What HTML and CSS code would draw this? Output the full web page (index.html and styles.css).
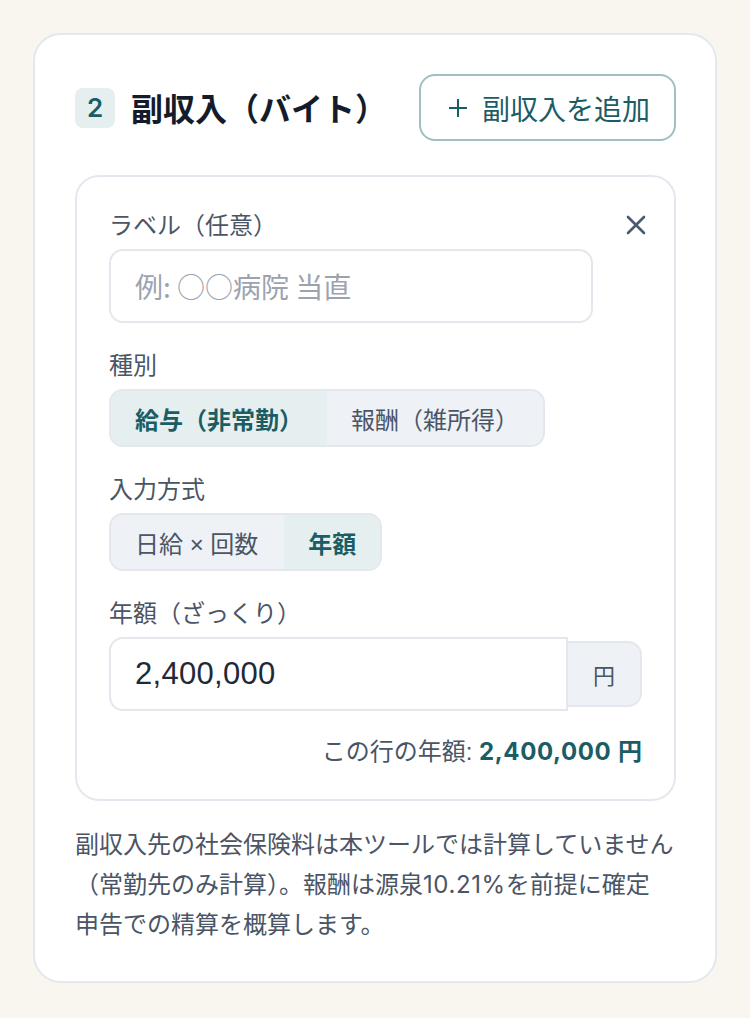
FILE: index.html
```html
<!DOCTYPE html>
<html lang="ja">
<head>
<meta charset="utf-8">
<title>副収入</title>
<link rel="stylesheet" href="styles.css">
</head>
<body>
<section class="card">
  <header class="card-head">
    <div class="head-title">
      <span class="step">2</span>
      <h2 class="title">副収入（バイト）</h2>
    </div>
    <button class="add-btn" type="button">
      <svg class="plus" viewBox="0 0 20 20" width="20" height="20"><path d="M10 1v18M1 10h18" stroke="currentColor" stroke-width="2" fill="none"/></svg>
      <span>副収入を追加</span>
    </button>
  </header>

  <div class="entry">
    <button class="close" type="button" aria-label="削除">
      <svg viewBox="0 0 20 20" width="20" height="20"><path d="M2 2l16 16M18 2L2 18" stroke="currentColor" stroke-width="2.6" stroke-linecap="round" fill="none"/></svg>
    </button>

    <div class="field">
      <label class="label">ラベル（任意）</label>
      <input class="text-input" type="text" placeholder="例: ○○病院 当直">
    </div>

    <div class="field">
      <span class="label">種別</span>
      <div class="seg">
        <span class="seg-item active">給与（非常勤）</span>
        <span class="seg-item">報酬（雑所得）</span>
      </div>
    </div>

    <div class="field">
      <span class="label">入力方式</span>
      <div class="seg">
        <span class="seg-item wide">日給 × 回数</span>
        <span class="seg-item active">年額</span>
      </div>
    </div>

    <div class="field">
      <label class="label">年額（ざっくり）</label>
      <div class="amount-row">
        <input class="amount-input" type="text" value="2,400,000">
        <span class="suffix">円</span>
      </div>
    </div>

    <p class="total">この行の年額: <strong><span class="num">2,400,000</span> 円</strong></p>
  </div>

  <p class="note">副収入先の社会保険料は本ツールでは計算していません（常勤先のみ計算）。報酬は源泉<span class="num">10.21%</span>を前提に確定<br>申告での精算を概算します。</p>
</section>
</body>
</html>
```

FILE: styles.css
```css
* { box-sizing: border-box; }

html, body {
  margin: 0;
  padding: 0;
}

body {
  background: #f9f6ef;
  font-family: "Liberation Sans", "Noto Sans CJK JP", sans-serif;
  color: #1f2937;
  padding: 33px;
}

.card {
  background: #ffffff;
  border: 2px solid #e4e8ee;
  border-radius: 28px;
  padding: 39px 39px 36px 40px;
}

.card-head {
  display: flex;
  align-items: center;
  justify-content: space-between;
}

.head-title {
  display: flex;
  align-items: center;
  gap: 16px;
}

.step {
  width: 40px;
  height: 40px;
  border-radius: 8px;
  background: #e5eff0;
  color: #1a5d65;
  font-family: "Inter", sans-serif;
  font-weight: 600;
  font-size: 26px;
  display: flex;
  align-items: center;
  justify-content: center;
}

.title {
  margin: 0;
  font-size: 32px;
  font-weight: 700;
  color: #141c2c;
  font-family: "Noto Sans CJK JP", sans-serif;
  line-height: 1.2;
}

.add-btn {
  height: 67px;
  padding: 0 24px 0 27px;
  border: 2px solid #9fbfc3;
  border-radius: 16px;
  background: #ffffff;
  color: #1a5d65;
  font-family: "Noto Sans CJK JP", sans-serif;
  font-size: 28px;
  display: flex;
  align-items: center;
  gap: 14px;
}

.plus { display: block; }

.entry {
  position: relative;
  margin-top: 34px;
  border: 2px solid #e4e8ee;
  border-radius: 24px;
  padding: 32px 32px 30px;
}

.close {
  position: absolute;
  top: 38px;
  right: 28px;
  width: 20px;
  height: 20px;
  padding: 0;
  border: 0;
  background: none;
  color: #4b5a6e;
}

.close svg { display: block; }

.field + .field { margin-top: 26px; }

.label {
  display: block;
  font-size: 24px;
  line-height: 34px;
  color: #4a5565;
  margin-bottom: 6px;
}

.text-input {
  display: block;
  width: 484px;
  height: 74px;
  border: 2px solid #e4e8ee;
  border-radius: 14px;
  padding: 0 24px;
  font-family: "Noto Sans CJK JP", sans-serif;
  font-size: 28px;
  color: #1f2937;
  outline: none;
}

.text-input::placeholder { color: #9ca3af; }

.seg {
  display: inline-flex;
  height: 58px;
  border: 2px solid #e4e8ee;
  border-radius: 14px;
  background: #eef1f5;
  overflow: hidden;
}

.seg-item {
  display: flex;
  align-items: center;
  padding: 0 24px;
  font-size: 24px;
  color: #4a5565;
}

.seg-item.wide { padding: 0 26px 0 24px; }

.seg-item.active {
  background: #e5eff0;
  color: #1a5d65;
  font-weight: 700;
}

.amount-row {
  display: flex;
  align-items: center;
}

.amount-input {
  flex: 1;
  min-width: 0;
  height: 74px;
  border: 2px solid #e4e8ee;
  border-radius: 14px 0 0 14px;
  padding: 0 24px;
  font-family: "Liberation Sans", sans-serif;
  font-size: 31px;
  letter-spacing: 0.3px;
  color: #1f2937;
  outline: none;
}

.suffix {
  width: 74px;
  height: 66px;
  background: #eef1f5;
  border: 2px solid #e4e8ee;
  border-left: 0;
  border-radius: 0 14px 14px 0;
  display: flex;
  align-items: center;
  justify-content: center;
  font-size: 22px;
  color: #4a5565;
}

.total {
  margin: 24px 0 0;
  text-align: right;
  font-size: 24px;
  line-height: 34px;
  color: #4a5565;
}

.total strong {
  color: #1a5d65;
  font-weight: 700;
}

.total .num {
  font-family: "Inter", sans-serif;
  letter-spacing: 0.6px;
}

.note {
  margin: 24px 0 0;
  font-size: 24px;
  line-height: 40px;
  color: #4a5565;
}

.note .num {
  font-family: "Inter", sans-serif;
  letter-spacing: 0.6px;
}
```
